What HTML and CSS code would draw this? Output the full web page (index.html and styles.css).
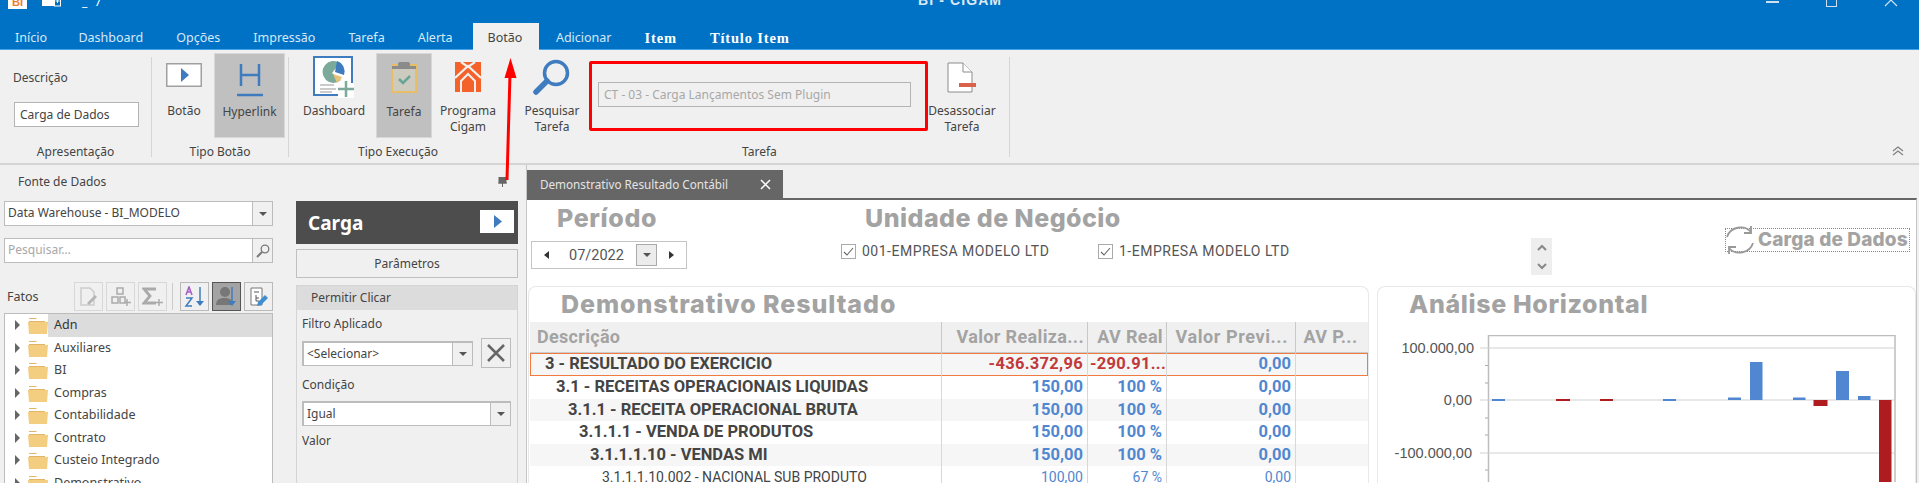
FILE: index.html
```html
<!DOCTYPE html>
<html lang="pt">
<head>
<meta charset="utf-8">
<title>BI - CIGAM</title>
<link rel="stylesheet" href="styles.css">
</head>
<body>
<svg class="defs" width="0" height="0">
  <symbol id="folder" viewBox="0 0 20 18"><path d="M1 2h7l2 2h7v3H1z" fill="#e0b565"/><path d="M1 3h16v2H1z" fill="#fff"/><path d="M0 6h20l-1 12H1z" fill="#f3cd80"/></symbol>
  <symbol id="play" viewBox="0 0 36 24"><rect x=".75" y=".75" width="34.500" height="22.500" fill="#fff" stroke="#a0a0a0" stroke-width="1.500"/><path d="M15 5l8 7-8 7z" fill="#3f7cbf"/></symbol>
  <symbol id="arrow" viewBox="0 0 8 8"><path d="M0 2h8L4 6z" fill="#555"/></symbol>
</svg>

<header class="titlebar">
  <div class="qat">
    <span class="appicon">BI</span>
    <svg class="newdoc" viewBox="0 0 20 12"><rect x="0" y="0" width="12" height="9" fill="#fff"/><rect x="12.500" y="0" width="6" height="9" fill="#0072c6" stroke="#fff"/><path d="M15.500 2v4M13.500 4h4" stroke="#fff"/></svg>
    <span class="qatmark">_ 7</span>
  </div>
  <div class="apptitle">BI - CIGAM</div>
  <div class="winbtns">
    <span class="winmin"></span>
    <span class="winmax"></span>
    <svg class="winclose" viewBox="0 0 14 8"><path d="M1 7l6-6 6 6" fill="none" stroke="#cfe0f0" stroke-width="1.200"/></svg>
  </div>
</header>

<nav class="tabs">
  <span class="tab first">Início</span>
  <span class="tab">Dashboard</span>
  <span class="tab">Opções</span>
  <span class="tab">Impressão</span>
  <span class="tab">Tarefa</span>
  <span class="tab before-active">Alerta</span>
  <span class="tab active">Botão</span>
  <span class="tab">Adicionar</span>
  <span class="tab ctx">Item</span>
  <span class="tab ctx">Título Item</span>
</nav>

<section class="ribbon">
  <div class="group g-apres">
    <div class="gbody apres">
      <span class="desc">Descrição</span>
      <span class="field">Carga de Dados</span>
    </div>
    <div class="glabel">Apresentação</div>
  </div>
  <div class="group g-tipo">
    <div class="gbody">
      <div class="rbtn w-botao"><div class="ric"><svg width="36" height="24"><use href="#play"/></svg></div><span>Botão</span></div>
      <div class="rbtn on w-hyper"><div class="ric"><svg width="26" height="34" viewBox="0 0 26 34"><path d="M4 1v22M22 1v22M4 12h18" stroke="#3f7cbf" stroke-width="2.500" fill="none"/><path d="M0 32h26" stroke="#3f7cbf" stroke-width="2.500"/></svg></div><span>Hyperlink</span></div>
    </div>
    <div class="glabel">Tipo Botão</div>
  </div>
  <div class="group g-exec">
    <div class="gbody">
      <div class="rbtn w-dash"><div class="ric"><svg width="42" height="42" viewBox="0 0 42 42"><path d="M1 1h38v38H1z" fill="#fff" stroke="#3f7cbf" stroke-width="2"/><path d="M27 7a11 11 0 1 0 1 17l-9-7z" fill="#7ba99a"/><path d="M24 5a11 11 0 0 1 7 14l-9-3z" fill="#3f7cbf"/><path d="M20 18l9 3a11 11 0 0 1-5 6z" fill="#e8c278"/><path d="M7 29h14M7 33h16M7 36h12" stroke="#bbb" stroke-width="1.500"/><rect x="25" y="27" width="16" height="15" fill="#fff"/><path d="M33 25v16M25 33h16" stroke="#7ba99a" stroke-width="2.500"/></svg></div><span>Dashboard</span></div>
      <div class="rbtn on w-tarefa"><div class="ric"><svg width="26" height="32" viewBox="0 0 26 32"><rect x="1" y="4" width="24" height="27" fill="#cdcac0" stroke="#e8bd68" stroke-width="2"/><rect x="7" y="1" width="12" height="5" rx="2" fill="#8b8b8b"/><rect x="1" y="5" width="24" height="3" fill="#8b8b8b"/><path d="M8 18l4 4 7-7" fill="none" stroke="#67a596" stroke-width="2.500"/></svg></div><span>Tarefa</span></div>
      <div class="rbtn w-prog"><div class="ric"><svg width="26" height="30" viewBox="0 0 26 30"><rect width="26" height="30" fill="#f4622a"/><path d="M0 16L13 4l13 12M6 0l7 5 7-5" fill="none" stroke="#f0f0f0" stroke-width="2.200"/><path d="M6 30V19l7-7 7 7v11" fill="none" stroke="#f0f0f0" stroke-width="2"/></svg></div><span>Programa<br>Cigam</span></div>
      <div class="rbtn w-pesq"><div class="ric"><svg width="38" height="36" viewBox="0 0 38 36"><circle cx="23" cy="14" r="11.500" fill="none" stroke="#3f7cbf" stroke-width="3.500"/><path d="M14 22L3 33" stroke="#3f7cbf" stroke-width="5.500" stroke-linecap="round"/></svg></div><span>Pesquisar<br>Tarefa</span></div>
      <div class="redbox"><div class="taskfield">CT - 03 - Carga Lançamentos Sem Plugin</div></div>
      <div class="rbtn w-desas"><div class="ric"><svg width="30" height="32" viewBox="0 0 30 32"><path d="M1 1h15l9 9v20H1z" fill="#fff" stroke="#8c8c8c"/><path d="M16 1v9h9" fill="#fff" stroke="#8c8c8c"/><rect x="12" y="21" width="17" height="4" fill="#d8634a"/></svg></div><span>Desassociar<br>Tarefa</span></div>
    </div>
    <div class="glabel gl-exec"><span class="gl-a">Tipo Execução</span><span class="gl-b">Tarefa</span></div>
  </div>
  <svg class="collapse" width="14" height="12" viewBox="0 0 14 12"><path d="M2 6l5-4 5 4M2 10l5-4 5 4" fill="none" stroke="#808080" stroke-width="1.300"/></svg>
</section>

<main class="lower">
  <aside class="dock">
    <div class="dockhead"><span>Fonte de Dados</span>
      <svg class="pin" width="9" height="10" viewBox="0 0 9 10"><path d="M1 0h7v6H1zM0 6h9M4.500 6v4" fill="#666" stroke="#666"/></svg>
    </div>
    <div class="dockbody">
      <div class="colleft">
        <div class="combo"><span class="ctext">Data Warehouse - BI_MODELO</span><span class="cbtn"><svg width="8" height="8"><use href="#arrow"/></svg></span></div>
        <div class="combo search"><span class="ctext ph">Pesquisar…</span><span class="cbtn"><svg width="14" height="14" viewBox="0 0 14 14"><circle cx="9" cy="5" r="3.800" fill="none" stroke="#777" stroke-width="1.300"/><path d="M6 8l-5 5" stroke="#777" stroke-width="2"/></svg></span></div>
        <div class="factsbar">
          <span class="flabel">Fatos</span>
          <span class="fbtn dim"><svg width="20" height="20" viewBox="0 0 20 20"><path d="M2 1h9l4 4v13H2z" fill="none" stroke="#ccc" stroke-width="1.500"/><path d="M8 16l8-8 2 2-8 8z" fill="#b5b5b5"/></svg></span>
          <span class="fbtn dim"><svg width="20" height="20" viewBox="0 0 20 20"><path d="M6 1h6v6H6zM1 10h6v6H1zM9 10h5v6H9z" fill="none" stroke="#aaa" stroke-width="1.500"/><path d="M16 12v7M13 15.500h7" stroke="#aaa" stroke-width="1.500"/></svg></span>
          <span class="fbtn dim"><svg width="22" height="20" viewBox="0 0 22 20"><path d="M14 2H2l6 7-6 7h12" fill="none" stroke="#aaa" stroke-width="2.800"/><path d="M17 12v7M14 15.500h7" stroke="#aaa" stroke-width="1.500"/></svg></span>
          <span class="fsep"></span>
          <span class="fbtn"><svg width="22" height="22" viewBox="0 0 22 22"><path d="M2 9l3-8 3 8M3 6h4" fill="none" stroke="#a85fc8" stroke-width="1.600"/><path d="M2 12h6l-6 8h6" fill="none" stroke="#3f7cbf" stroke-width="1.500"/><path d="M16 1v18" stroke="#3f7cbf" stroke-width="1.500"/><path d="M12 15h8l-4 5z" fill="#3f7cbf"/></svg></span>
          <span class="fbtn pressed"><svg width="24" height="22" viewBox="0 0 24 22"><circle cx="10" cy="6" r="5" fill="#777"/><path d="M1 19c0-6 4-7 9-7s8 2 8 7z" fill="#777"/><path d="M17 1v18" stroke="#3f7cbf" stroke-width="1.500"/><path d="M13 15h8l-4 5z" fill="#3f7cbf"/></svg></span>
          <span class="fbtn"><svg width="20" height="20" viewBox="0 0 20 20"><path d="M2 1h11v17H2z" fill="#fff" stroke="#777"/><path d="M5 5h5M7 8v6h3M7 11h3" fill="none" stroke="#555"/><path d="M9 15l7-7 3 3-7 7-4 1z" fill="#3f8fd0"/></svg></span>
        </div>
        <div class="tree">
          <div class="node sel"><i class="caret"></i><svg class="fold"><use href="#folder"/></svg><span>Adn</span></div>
          <div class="node"><i class="caret"></i><svg class="fold"><use href="#folder"/></svg><span>Auxiliares</span></div>
          <div class="node"><i class="caret"></i><svg class="fold"><use href="#folder"/></svg><span>BI</span></div>
          <div class="node"><i class="caret"></i><svg class="fold"><use href="#folder"/></svg><span>Compras</span></div>
          <div class="node"><i class="caret"></i><svg class="fold"><use href="#folder"/></svg><span>Contabilidade</span></div>
          <div class="node"><i class="caret"></i><svg class="fold"><use href="#folder"/></svg><span>Contrato</span></div>
          <div class="node"><i class="caret"></i><svg class="fold"><use href="#folder"/></svg><span>Custeio Integrado</span></div>
          <div class="node"><i class="caret"></i><svg class="fold"><use href="#folder"/></svg><span>Demonstrativo</span></div>
        </div>
      </div>
      <div class="colright">
        <div class="cargahead"><span>Carga</span><svg width="34" height="23" viewBox="0 0 34 23"><rect width="34" height="23" fill="#fff"/><path d="M14 5l8 6.500-8 6.500z" fill="#3f7cbf"/></svg></div>
        <div class="parambtn">Parâmetros</div>
        <div class="permit">
          <div class="permithead">Permitir Clicar</div>
          <div class="permitbody">
            <div class="plabel">Filtro Aplicado</div>
            <div class="filterrow">
              <div class="combo small"><span class="ctext">&lt;Selecionar&gt;</span><span class="cbtn"><svg width="8" height="8"><use href="#arrow"/></svg></span></div>
              <span class="xbtn"><svg width="20" height="20" viewBox="0 0 20 20"><path d="M2 2l16 16M18 2L2 18" stroke="#666" stroke-width="2.500"/></svg></span>
            </div>
            <div class="plabel cond">Condição</div>
            <div class="combo small"><span class="ctext">Igual</span><span class="cbtn"><svg width="8" height="8"><use href="#arrow"/></svg></span></div>
            <div class="plabel valor">Valor</div>
          </div>
        </div>
      </div>
    </div>
  </aside>

  <section class="docarea">
    <div class="doctabs"><div class="doctab"><span>Demonstrativo Resultado Contábil</span><svg width="11" height="11" viewBox="0 0 11 11"><path d="M1 1l9 9M10 1l-9 9" stroke="#fff" stroke-width="1.500"/></svg></div></div>
    <div class="doc">
      <div class="filters">
        <div class="f-period">
          <h2 class="ttl">Período</h2>
          <div class="datepick">
            <i class="tri-l"></i>
            <span class="dateval">07/2022</span>
            <span class="datebtn"><svg width="8" height="8"><use href="#arrow"/></svg></span>
            <i class="tri-r"></i>
          </div>
        </div>
        <div class="f-unit">
          <h2 class="ttl">Unidade de Negócio</h2>
          <div class="checks">
            <label class="chk c1"><svg class="cb" width="15" height="15" viewBox="0 0 15 15"><rect x=".5" y=".5" width="14" height="14" fill="#fff" stroke="#aaa"/><path d="M3 8l3 3 6-7" fill="none" stroke="#666" stroke-width="1.100"/></svg>001-EMPRESA MODELO LTD</label>
            <label class="chk"><svg class="cb" width="15" height="15" viewBox="0 0 15 15"><rect x=".5" y=".5" width="14" height="14" fill="#fff" stroke="#aaa"/><path d="M3 8l3 3 6-7" fill="none" stroke="#666" stroke-width="1.100"/></svg>1-EMPRESA MODELO LTD</label>
          </div>
        </div>
        <div class="spin"><svg width="12" height="30" viewBox="0 0 12 30"><path d="M2 8l4-4 4 4M2 22l4 4 4-4" fill="none" stroke="#888" stroke-width="2"/></svg></div>
        <div class="reload">
          <svg class="reloadic" width="32" height="30" viewBox="0 0 32 30"><path d="M3 12C6 2 20-1 27 7M29 18c-3 10-17 13-24 5" fill="none" stroke="#999" stroke-width="1.800"/><path d="M27 1v7h-7M5 29v-7h7" fill="none" stroke="#999" stroke-width="1.800"/></svg>
          <span class="reloadtxt">Carga de Dados</span>
        </div>
      </div>
      <div class="cards">
        <article class="card c-table">
          <h2 class="ttl cardttl">Demonstrativo Resultado</h2>
          <div class="grid">
            <div class="row head"><span>Descrição</span><span>Valor Realiza...</span><span>AV Real</span><span>Valor Previ...</span><span>AV P...</span></div>
            <div class="row b focus neg l0"><span>3 - RESULTADO DO EXERCICIO</span><span>-436.372,96</span><span>-290.91...</span><span class="pos">0,00</span><span></span></div>
            <div class="row b l1"><span>3.1 - RECEITAS OPERACIONAIS LIQUIDAS</span><span>150,00</span><span>100 %</span><span>0,00</span><span></span></div>
            <div class="row b alt l2"><span>3.1.1 - RECEITA OPERACIONAL BRUTA</span><span>150,00</span><span>100 %</span><span>0,00</span><span></span></div>
            <div class="row b l3"><span>3.1.1.1 - VENDA DE PRODUTOS</span><span>150,00</span><span>100 %</span><span>0,00</span><span></span></div>
            <div class="row b alt l4"><span>3.1.1.1.10 - VENDAS MI</span><span>150,00</span><span>100 %</span><span>0,00</span><span></span></div>
            <div class="row leaf l5"><span>3.1.1.1.10.002 - NACIONAL SUB PRODUTO</span><span>100,00</span><span>67 %</span><span>0,00</span><span></span></div>
          </div>
        </article>
        <article class="card c-chart">
          <h2 class="ttl cardttl2">Análise Horizontal</h2>
          <svg class="chart" width="530" height="147" viewBox="0 0 530 147">
            <path d="M108 .5H515V147M108.500 0V147" fill="none" stroke="#bdbdbd" stroke-width="1.500"/>
            <path d="M100 13H515M100 65H515M100 118H515" stroke="#d2d2d2" stroke-width="1.200"/>
            <path d="M105 30.500h3M105 48h3M105 83h3M105 100h3M105 135h3" stroke="#aaa"/>
            <g fill="#5087d0">
              <rect x="112" y="64" width="13" height="2"/><rect x="283" y="64" width="13" height="2"/>
              <rect x="348" y="62.500" width="13" height="2.500"/><rect x="370" y="27" width="12.500" height="38"/>
              <rect x="413" y="62.500" width="12.500" height="2.500"/><rect x="456" y="36" width="13" height="29"/>
              <rect x="478" y="61" width="12.500" height="4"/>
            </g>
            <g fill="#ae1c20">
              <rect x="176" y="64" width="14" height="2"/><rect x="220" y="64" width="13" height="2"/>
              <rect x="433.500" y="65" width="14" height="6"/><rect x="499" y="65" width="12.500" height="82"/>
            </g>
            <g class="ylab">
              <text x="94" y="18">100.000,00</text>
              <text x="92" y="70">0,00</text>
              <text x="92" y="123">-100.000,00</text>
            </g>
          </svg>
        </article>
      </div>
    </div>
  </section>
</main>

<svg class="annot" width="20" height="130" viewBox="0 0 20 130"><path d="M10.500 0L16.500 20H4.500z" fill="#f00"/><path d="M10 16L7 122" stroke="#f00" stroke-width="3"/></svg>
</body>
</html>
```

FILE: styles.css
```css
* { box-sizing: border-box; }
html, body { margin: 0; padding: 0; }
body {
  width: 1919px; height: 483px; overflow: hidden; position: relative;
  font-family: "Noto Sans", "Open Sans", sans-serif; font-size: 12px; color: #444; background: #f0f0f0;
}
.defs { position: absolute; }

/* title bar */
.titlebar { height: 23px; background: #0072c6; display: flex; overflow: hidden; position: relative; }
.qat { display: flex; gap: 15px; align-items: flex-start; padding-left: 8px; height: 9px; }
.appicon { width: 19px; height: 9px; background: #fff; color: #f07a30; font: bold 11px/5px "Liberation Sans", sans-serif; text-align: center; }
.newdoc { width: 20px; height: 12px; margin-top: -3px; }
.qatmark { color: #fff; font-size: 12px; line-height: 3px; letter-spacing: 2px; margin-left: 5px; }
.apptitle { position: absolute; left: 918px; top: -9px; color: #dbe9f5; font: bold 14px/18px "Liberation Sans", sans-serif; letter-spacing: 1.100px; }
.winbtns { margin-left: auto; display: flex; align-items: flex-start; gap: 47px; padding-right: 21px; }
.winmin { width: 13px; height: 2px; margin-top: 1px; background: #cfe0f0; }
.winmax { width: 11px; height: 7px; border: 1px solid #cfe0f0; border-top: 0; }
.winclose { width: 14px; height: 8px; margin-top: -1px; }

/* tabs */
.tabs { height: 27px; background: #0072c6; display: flex; align-items: stretch; border-bottom: 1px solid #4aa3e6; }
.tab { padding: 3px 16.500px 0; color: #d8e8f5; line-height: 24px; font-size: 12.500px; }
.tab.first { padding-left: 15px; padding-right: 15px; }
.tab.before-active { padding-right: 20px; }
.tab.active { background: #f0f0f0; color: #444; margin-bottom: -1px; padding-left: 15px; padding-right: 17px; }
.tab.ctx { color: #fff; font: bold 14.500px/24px "Liberation Serif", serif; letter-spacing: .850px; }

/* ribbon */
.ribbon { height: 115px; display: flex; position: relative; background: #f0f0f0; border-bottom: 2px solid #d4d4d4; }
.group { display: flex; flex-direction: column; border-right: 1px solid #d5d5d5; margin-top: 7px; height: 100px; }
.g-apres { width: 152px; }
.g-tipo { width: 137px; }
.g-exec { width: 721px; }
.gbody { flex: none; height: 89px; display: flex; margin-top: -4px; }
.glabel { height: 22px; text-align: center; line-height: 20px; flex: none; }
.apres { flex-direction: column; padding: 16px 0 0 13px; }
.desc { line-height: 18px; }
.field { width: 125px; height: 25px; margin: 15px 0 0 1px; background: #fff; border: 1px solid #b4b4b4; line-height: 23px; padding-left: 5px; }
.rbtn { height: 85px; display: flex; flex-direction: column; align-items: center; text-align: center; line-height: 16px; flex: none; }
.rbtn.on { background: #c0c0c0; border: 1px solid #d8d8d8; }
.ric { height: 48px; display: flex; align-items: center; justify-content: center; flex: none; margin-top: 2px; }
.w-botao { width: 52px; margin-left: 6px; margin-right: 4px; }
.w-hyper { width: 71px; }
.w-dash { width: 68px; margin-left: 11px; margin-right: 8px; }
.w-tarefa { width: 56px; }
.w-prog { width: 62px; margin-left: 5px; }
.w-pesq { width: 60px; margin-left: 23px; }
.w-desas { width: 76px; margin-left: -4px; }
.w-botao .ric { padding-bottom: 8px; }
.w-dash .ric, .w-prog .ric, .w-pesq .ric { padding-bottom: 4px; }
.w-tarefa .ric { padding-bottom: 6px; }
.w-desas .ric { padding-bottom: 2px; }
.redbox { width: 339px; height: 70px; margin: 8px 0 0 7px; border: 3px solid #f00; border-radius: 2px; padding: 18px 0 0 6px; flex: none; }
.taskfield { width: 313px; height: 25px; border: 1px solid #b4b4b4; color: #a8a8a8; line-height: 23px; padding-left: 5px; white-space: nowrap; }
.gl-exec { display: flex; }
.gl-a { width: 218px; }
.gl-b { margin-left: 235px; }
.collapse { position: absolute; right: 14px; top: 95px; }

/* lower */
.lower { height: 318px; display: flex; }
.dock { width: 520px; padding: 7px 0 0 4px; flex: none; }
.dockhead { height: 20px; padding-left: 14px; line-height: 20px; display: flex; justify-content: space-between; padding-right: 13px; align-items: center; }
.dockbody { display: flex; margin-top: 9px; gap: 23px; }
.colleft { width: 269px; flex: none; }
.colright { width: 222px; flex: none; }
.combo { height: 25px; display: flex; background: #fff; border: 1px solid #bcbcbc; line-height: 22px; }
.combo.search { margin-top: 12px; }
.ctext { flex: 1; padding-left: 3px; white-space: nowrap; overflow: hidden; }
.ph { color: #a8a8a8; }
.cbtn { width: 20px; background: #f0f0f0; border-left: 1px solid #bcbcbc; display: flex; align-items: center; justify-content: center; flex: none; }
.factsbar { display: flex; align-items: center; height: 29px; margin-top: 19px; }
.flabel { width: 70px; padding-left: 3px; font-size: 12.500px; }
.fbtn { width: 29px; height: 29px; border: 1px solid #b9b9b9; margin-right: 3px; display: flex; align-items: center; justify-content: center; flex: none; }
.fbtn:last-child { margin-right: 0; }
.fbtn.dim { border-color: #d8d8d8; }
.fbtn.pressed { background: #a3a3a3; border: 1px solid #555; }
.fsep { width: 1px; height: 27px; background: #ccc; margin: 0 7px 0 2px; }
.tree { height: 200px; margin-top: 2px; background: #fff; border: 1px solid #bcbcbc; overflow: hidden; padding-top: 0; }
.node { height: 22.500px; display: flex; align-items: center; padding-left: 10px; }
.node span { line-height: 22px; padding-left: 6px; font-size: 12.500px; }
.node.sel span { flex: 1; background: #dcdcdc; align-self: stretch; color: #333; }
.caret { width: 0; height: 0; border-left: 5px solid #666; border-top: 5px solid transparent; border-bottom: 5px solid transparent; }
.fold { width: 20px; height: 18px; margin-left: 8px; flex: none; }
.cargahead { height: 43px; background: #4d4d4d; color: #fff; font: bold 19px "Noto Sans", sans-serif; padding: 0 4px 0 12px; display: flex; align-items: center; justify-content: space-between; }
.cargahead svg { margin-top: -3px; }
.parambtn { height: 29px; margin-top: 5px; border: 1px solid #c0c0c0; text-align: center; line-height: 28px; }
.permit { height: 200px; margin-top: 7px; border: 1px solid #d4d4d4; }
.permithead { height: 24px; background: #dcdcdc; padding-left: 14px; line-height: 23px; }
.permitbody { padding: 3px 6px 0 5px; }
.plabel { line-height: 22px; }
.filterrow { display: flex; gap: 8px; align-items: center; margin-top: 3px; height: 30px; }
.combo.small { height: 25px; flex: 1; border-width: 2px 1px 1px 2px; }
.xbtn { width: 30px; height: 30px; border: 1px solid #bcbcbc; display: flex; align-items: center; justify-content: center; flex: none; }
.cond { margin-top: 6px; }
.combo.small + .valor { margin-top: 4px; }
.plabel.cond + .combo { margin-top: 5px; }

/* document */
.docarea { flex: 1; display: flex; flex-direction: column; border-left: 1px solid #c5c5c5; margin-left: 6px; padding-right: 2px; padding-top: 5px; min-width: 0; }
.doctabs { height: 28px; flex: none; }
.doctab { width: 256px; height: 28px; margin-left: 0; background: #666; color: #e4e4e4; display: flex; align-items: center; justify-content: space-between; padding: 0 12px 0 13px; font-size: 11.700px; }
.doc { flex: 1; background: #fff; border-top: 2px solid #666; border-right: 1px solid #c5c5c5; min-height: 0; overflow: hidden; }
.filters { height: 86px; display: flex; position: relative; }
.ttl { margin: 0; color: #a3a3a3; font: 800 25px/32px Inter, Roboto, sans-serif; letter-spacing: .650px; white-space: nowrap; }
.cardttl { letter-spacing: .950px; }
.f-period { width: 338px; padding: 2px 0 0 4px; flex: none; }
.f-period .ttl { padding-left: 26px; }
.datepick { width: 156px; height: 28px; margin-top: 7px; border: 1px solid #c5c5c5; display: flex; align-items: center; padding: 0 12px; font-size: 13px; color: #555; }
.tri-l { border-right: 5px solid #333; border-top: 4px solid transparent; border-bottom: 4px solid transparent; }
.tri-r { border-left: 5px solid #333; border-top: 4px solid transparent; border-bottom: 4px solid transparent; margin-left: 12px; }
.dateval { margin-left: 20px; width: 68px; font-family: Roboto, sans-serif; font-size: 14.500px; }
.datebtn { width: 21px; height: 22px; background: #ececec; border: 1px solid #aaa; display: flex; align-items: center; justify-content: center; }
.f-unit { width: 666px; flex: none; padding-top: 2px; }
.f-unit .ttl { letter-spacing: .450px; }
.checks { display: flex; margin: 10px 0 0 -24px; }
.chk { display: flex; align-items: center; gap: 6px; font: 14px/15px Roboto, sans-serif; color: #555; letter-spacing: .500px; white-space: nowrap; }
.chk.c1 { width: 257px; }
.spin { width: 21px; height: 37px; margin-top: 38px; background: #eee; display: flex; align-items: center; justify-content: center; flex: none; }
.reload { display: flex; align-items: center; margin: 28px 0 0 173px; flex: none; height: 24px; border: 1px dotted #8a8a8a; }
.reloadic { flex: none; margin: -3px 1px -3px -2px; }
.reloadtxt { padding: 0 1px; color: #a3a3a3; font: 800 19px/22px Inter, Roboto, sans-serif; letter-spacing: .150px; white-space: nowrap; }
.cards { display: flex; gap: 8px; height: 200px; padding-left: 0; }
.card { border: 1px solid #e8e8e8; border-bottom: 0; border-radius: 8px 8px 0 0; flex: none; overflow: hidden; }
.c-table { width: 841px; margin-left: 1px; }
.c-chart { width: 539px; }
.cardttl { padding-left: 32px; height: 35px; line-height: 34px; }
.cardttl2 { padding-left: 31px; height: 48px; line-height: 35px; }
.chart { display: block; margin-left: 2px; }
.ylab text { font: 14.500px "Liberation Sans", sans-serif; fill: #555; text-anchor: end; }
.grid { padding-left: 1px; }
.row { display: grid; grid-template-columns: 412px 146px 79px 129px 72px; height: 22.500px; align-items: stretch; font: 14px/22px Roboto, sans-serif; }
.row > span { border-right: 1px solid #d8d8d8; padding: 0 4px 0 2px; text-align: right; white-space: nowrap; overflow: hidden; color: #5087d0; }
.row > span:first-child { text-align: left; color: #444; }
.row > span:last-child { border-right: 0; }
.row.head { height: 31px; background: #f0f0f0; border-bottom: 1px solid #ccc; font: 700 18px/30px Roboto, sans-serif; }
.row.head > span, .row.head > span:first-child { color: #a3a3a3; border-color: #c8c8c8; padding: 0 3px 0 0; letter-spacing: .350px; }
.row.head > span:nth-child(4) { padding-right: 7px; letter-spacing: .600px; }
.row.head > span:first-child { padding-left: 7px; letter-spacing: .300px; }
.row.head > span:last-child { text-align: center; }
.row.b { font-weight: 700; font-size: 16.500px; letter-spacing: 0; }
.row.alt { background: #f6f6f6; }
.row.focus { background: #f6f6f6; box-shadow: inset 0 0 0 1px #f07a40; height: 23px; }
.row.neg > span { color: #c0393b; letter-spacing: .300px; }
.row.neg > span.pos { color: #5087d0; letter-spacing: 0; }
.row.neg > span:first-child { color: #444; letter-spacing: 0; }
.l0 > span:first-child { padding-left: 15px; }
.l1 > span:first-child { padding-left: 26px; }
.l2 > span:first-child { padding-left: 38px; }
.l3 > span:first-child { padding-left: 49px; }
.l4 > span:first-child { padding-left: 60px; }
.l5 > span:first-child { padding-left: 72px; font-size: 14px; }

/* annotation arrow */
.annot { position: absolute; left: 500px; top: 58px; pointer-events: none; }
```
